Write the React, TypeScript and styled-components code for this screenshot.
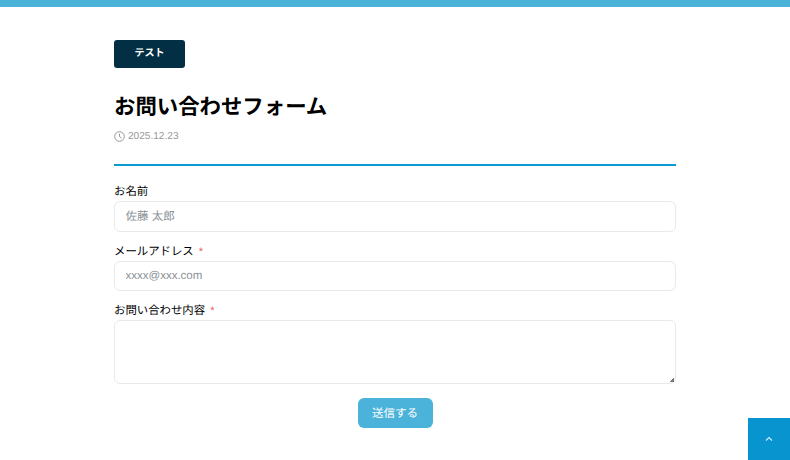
import { FC } from "react";
import styled, { createGlobalStyle } from "styled-components";

const GlobalStyle = createGlobalStyle`
  html, body {
    margin: 0;
    padding: 0;
    background: #fff;
    overflow: hidden;
  }
  body {
    font-family: "Liberation Sans", "Noto Sans CJK JP", sans-serif;
    color: #000;
    text-rendering: geometricPrecision;
  }
`;

const Page = styled.div`
  height: 460px;
  border-top: 7px solid #4bb3da;
  box-sizing: border-box;
`;
const Main = styled.main`
  width: 562px;
  margin-left: 114px;
  padding-top: 33px;
`;
const Badge = styled.div`
  width: 71px;
  height: 28px;
  border-radius: 3px;
  background: #022f43;
  color: #fff;
  font-size: 10px;
  font-weight: 700;
  line-height: 28px;
  text-align: center;
`;
const Title = styled.h1`
  margin: 23px 0 0;
  font-size: 21.4px;
  font-weight: 700;
  line-height: 32px;
`;
const DateRow = styled.div`
  display: flex;
  align-items: center;
  gap: 3px;
  margin-top: 5.5px;
  height: 16px;
  color: #999;
  font-size: 10.1px;
`;
const Divider = styled.hr`
  margin: 19.5px 0 0;
  border: 0;
  height: 2px;
  background: #0a9bd3;
`;
const Form = styled.form`
  display: flex;
  flex-direction: column;
  margin-top: 17.4px;
`;
const Field = styled.div`
  display: flex;
  flex-direction: column;
  margin-bottom: 11px;
`;
const Label = styled.label`
  font-size: 11.4px;
  line-height: 18px;
  height: 18px;
`;
const Required = styled.span`
  margin-left: 5px;
  color: #f0625f;
  font-size: 11px;
`;
const inputBase = `
  box-sizing: border-box;
  width: 100%;
  border: 1px solid #e9e9e9;
  border-radius: 6px;
  padding: 0 10.5px;
  background: #fff;
  font-family: "Liberation Sans", "Noto Sans CJK JP", sans-serif;
  font-size: 11.5px;
  text-rendering: geometricPrecision;
  outline: none;
  &::placeholder { color: #8a8f94; opacity: 1; }
`;
const Input = styled.input`
  ${inputBase}
  height: 30.5px;
`;
const TextArea = styled.textarea`
  ${inputBase}
  display: block;
  height: 64px;
  padding-top: 8px;
  &::-webkit-resizer {
    background: linear-gradient(135deg, transparent 0 50%, #777 50% 70%, transparent 70% 78%, #777 78% 92%, transparent 92%) right 1px bottom 1px / 5px 5px no-repeat;
  }
`;
const SubmitRow = styled.div`
  display: flex;
  justify-content: center;
  margin-top: 3px;
`;
const SubmitButton = styled.button`
  width: 75px;
  height: 30px;
  border: 0;
  border-radius: 6px;
  background: #4bb3da;
  color: #fff;
  font-family: "Liberation Sans", "Noto Sans CJK JP", sans-serif;
  font-size: 11.5px;
  text-rendering: geometricPrecision;
`;
const TopButton = styled.a`
  position: fixed;
  right: 0;
  bottom: 0;
  width: 42px;
  height: 42px;
  display: flex;
  align-items: center;
  justify-content: center;
  background: #0894ce;
`;

const ClockIcon: FC = () => (
  <svg width="11" height="11" viewBox="0 0 11 11" fill="none" stroke="#999" strokeWidth="1">
    <circle cx="5.5" cy="5.5" r="4.8" />
    <path d="M5.5 2.6V5.7L7.5 6.9" />
  </svg>
);

const App: FC = () => {
  return (
    <Page>
      <GlobalStyle />
      <Main>
        <Badge>テスト</Badge>
        <Title>お問い合わせフォーム</Title>
        <DateRow>
          <ClockIcon />
          2025.12.23
        </DateRow>
        <Divider />
        <Form>
          <Field>
            <Label>お名前</Label>
            <Input placeholder="佐藤 太郎" />
          </Field>
          <Field>
            <Label>
              メールアドレス<Required>*</Required>
            </Label>
            <Input placeholder="xxxx@xxx.com" />
          </Field>
          <Field>
            <Label>
              お問い合わせ内容<Required>*</Required>
            </Label>
            <TextArea />
          </Field>
          <SubmitRow>
            <SubmitButton type="button">送信する</SubmitButton>
          </SubmitRow>
        </Form>
      </Main>
      <TopButton>
        <svg width="8" height="6" viewBox="0 0 8 6" fill="none" stroke="#cdeefa" strokeWidth="1.1">
          <path d="M1 4.5L4 1.5L7 4.5" />
        </svg>
      </TopButton>
    </Page>
  );
};

export default App;
